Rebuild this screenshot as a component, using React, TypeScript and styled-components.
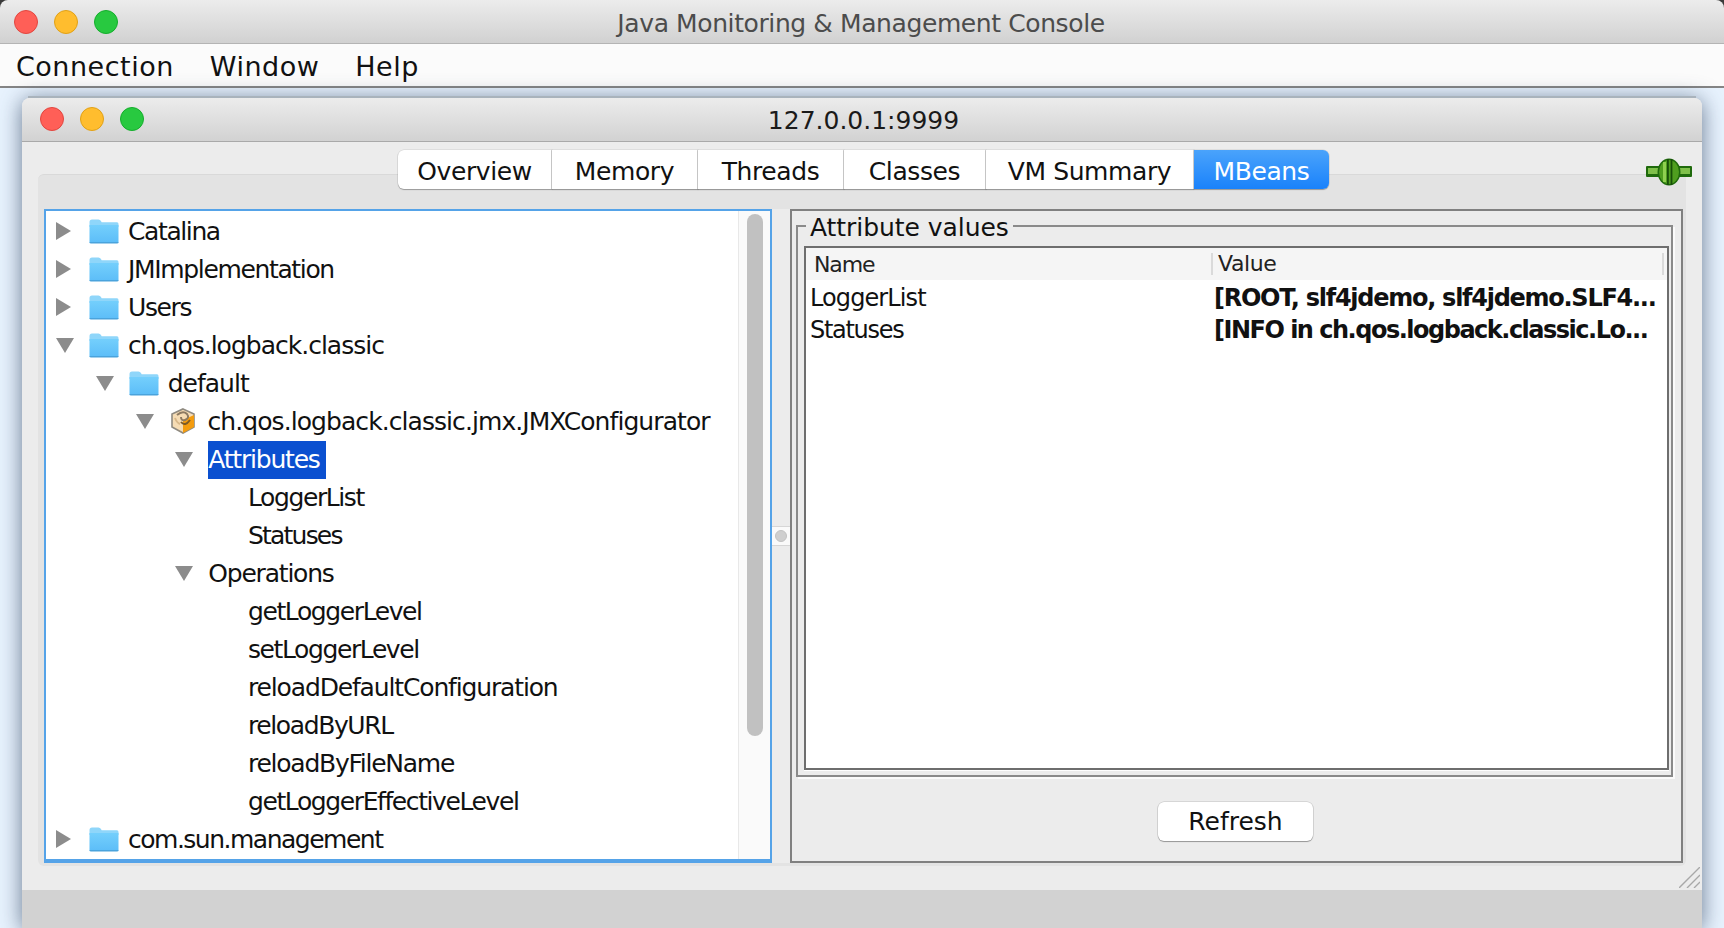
import React from 'react';
import styled, { createGlobalStyle } from 'styled-components';

const GlobalStyle = createGlobalStyle`
  html, body {
    margin: 0;
    padding: 0;
    background: #e8f3fe;
    overflow: hidden;
  }
  * {
    box-sizing: border-box;
  }
`;

const uiFont = `"DejaVu Sans", "Noto Sans", sans-serif`;

// ícones desenhados à mão

const Folder: React.FC = () => (
  <svg width="30" height="25" viewBox="0 0 30 25">
    <defs>
      <linearGradient id="folderBody" x1="0" y1="0" x2="0" y2="1">
        <stop offset="0" stopColor="#74cffc" />
        <stop offset="1" stopColor="#5cbdf8" />
      </linearGradient>
    </defs>
    <path d="M0.5 3 Q0.5 0.5 3 0.5 H9.5 Q11 0.5 12 2 L12.6 3.2 H28 Q29.5 3.2 29.5 5 V8 H0.5 Z" fill="#8fd6fa" />
    <path d="M0.5 6 H29.5 V22.5 Q29.5 24 28 24 H2 Q0.5 24 0.5 22.5 Z" fill="url(#folderBody)" />
    <path d="M0.5 23 H29.5 V23.2 Q29.5 24.6 28 24.6 H2 Q0.5 24.6 0.5 23.2 Z" fill="#4aa3dc" />
  </svg>
);

const Bean: React.FC = () => (
  <svg width="26" height="26" viewBox="-1 0 26 26">
    <path d="M13 1 L24 6 V19 L13 25 L2 19 V6 Z" fill="#f6dcb4" stroke="#8f8a80" strokeWidth="1.6" />
    <path d="M13 12 L24 7 V19 L13 25 Z" fill="#f49c0e" />
    <path d="M7 7 Q13 2 17 6 Q20 10 15 12 Q11 13 11 9" fill="none" stroke="#8d7a62" strokeWidth="2" />
    <path d="M11 14 Q15 19 20 12" fill="none" stroke="#7c5a28" strokeWidth="2" />
    <path d="M5 10 Q7 15 10 16" fill="none" stroke="#d8b88a" strokeWidth="2" />
  </svg>
);

const Plug: React.FC = () => (
  <svg width="46" height="28" viewBox="0 0 46 28">
    <rect x="0" y="8" width="46" height="11" rx="1" fill="#1f6a0c" />
    <rect x="2" y="10" width="42" height="6" fill="#7fc04a" />
    <ellipse cx="23" cy="14" rx="11.5" ry="13.5" fill="#1f6a0c" />
    <ellipse cx="23" cy="14" rx="10" ry="12" fill="#4f9e1f" />
    <rect x="17" y="4" width="3" height="20" fill="#8fd04f" />
    <rect x="21" y="1" width="1.8" height="26" fill="#174f08" />
    <rect x="24.6" y="1" width="1.8" height="26" fill="#174f08" />
  </svg>
);

const Grip: React.FC = () => (
  <svg width="21" height="21" viewBox="0 0 21 21">
    <path d="M0 21 L21 0 M8 21 L21 8 M15 21 L21 15" stroke="#a8a8a8" strokeWidth="1.4" fill="none" />
  </svg>
);

const Arrow: React.FC<{ open: boolean }> = ({ open }) =>
  open ? (
    <svg width="18" height="15" viewBox="0 0 18 15">
      <path d="M0 0 H18 L9 15 Z" fill="#8c8c8c" />
    </svg>
  ) : (
    <svg width="15" height="18" viewBox="0 0 15 18">
      <path d="M0 0 L15 9 L0 18 Z" fill="#8c8c8c" />
    </svg>
  );

type TreeNode = {
  label: string;
  level: number;
  arrow?: 'open' | 'closed';
  icon?: 'folder' | 'bean';
  selected?: boolean;
  spacing?: number;
};

const nodes: TreeNode[] = [
  { label: 'Catalina', level: 0, arrow: 'closed', icon: 'folder' },
  { label: 'JMImplementation', level: 0, arrow: 'closed', icon: 'folder', spacing: -1.35 },
  { label: 'Users', level: 0, arrow: 'closed', icon: 'folder' },
  { label: 'ch.qos.logback.classic', level: 0, arrow: 'open', icon: 'folder', spacing: -1.0 },
  { label: 'default', level: 1, arrow: 'open', icon: 'folder', spacing: -1.0 },
  { label: 'ch.qos.logback.classic.jmx.JMXConfigurator', level: 2, arrow: 'open', icon: 'bean', spacing: -0.93 },
  { label: 'Attributes', level: 3, arrow: 'open', selected: true, spacing: -1.2 },
  { label: 'LoggerList', level: 4 },
  { label: 'Statuses', level: 4, spacing: -1.8 },
  { label: 'Operations', level: 3, arrow: 'open', spacing: -1.2 },
  { label: 'getLoggerLevel', level: 4 },
  { label: 'setLoggerLevel', level: 4 },
  { label: 'reloadDefaultConfiguration', level: 4, spacing: -1.15 },
  { label: 'reloadByURL', level: 4 },
  { label: 'reloadByFileName', level: 4, spacing: -1.25 },
  { label: 'getLoggerEffectiveLevel', level: 4 },
  { label: 'com.sun.management', level: 0, arrow: 'closed', icon: 'folder', spacing: -1.5 },
];

const tabs = [
  { label: 'Overview', width: 154 },
  { label: 'Memory', width: 146 },
  { label: 'Threads', width: 146 },
  { label: 'Classes', width: 142 },
  { label: 'VM Summary', width: 208 },
  { label: 'MBeans', width: 135, active: true },
];

const attributes = [
  { name: 'LoggerList', nameSpacing: -0.9, value: '[ROOT, slf4jdemo, slf4jdemo.SLF4...', valueSpacing: -1.27 },
  { name: 'Statuses', nameSpacing: -1.3, value: '[INFO in ch.qos.logback.classic.Lo...', valueSpacing: -1.5 },
];

const App: React.FC = () => {
  return (
    <Screen>
      <GlobalStyle />
      <TitleBar>
        <Lights>
          <Light $fill="#ff5f57" $edge="#e2463f" />
          <Light $fill="#ffbd2e" $edge="#e1a116" />
          <Light $fill="#28c940" $edge="#14ae2c" />
        </Lights>
        <AppTitle>Java Monitoring &amp; Management Console</AppTitle>
      </TitleBar>
      <MenuBar>
        <MenuItem>Connection</MenuItem>
        <MenuItem>Window</MenuItem>
        <MenuItem>Help</MenuItem>
      </MenuBar>

      <Desktop>
        <InnerWindow>
          <InnerTitleBar>
            <InnerLights>
              <Light $fill="#ff5f57" $edge="#e2463f" />
              <Light $fill="#ffbd2e" $edge="#e1a116" />
              <Light $fill="#28c940" $edge="#14ae2c" />
            </InnerLights>
            <WindowTitle>127.0.0.1:9999</WindowTitle>
          </InnerTitleBar>

          <WindowBody>
            <TabStrip>
              {tabs.map((t) => (
                <Tab key={t.label} $width={t.width} $active={!!t.active}>
                  {t.label}
                </Tab>
              ))}
            </TabStrip>
            <PlugSlot>
              <Plug />
            </PlugSlot>

            <TabContent>
              <TreePane>
                <TreeRows>
                  {nodes.map((n) => (
                    <TreeRow key={n.label} $level={n.level}>
                      <ArrowSlot>{n.arrow && <Arrow open={n.arrow === 'open'} />}</ArrowSlot>
                      {n.icon && <IconSlot>{n.icon === 'folder' ? <Folder /> : <Bean />}</IconSlot>}
                      <NodeLabel $selected={!!n.selected} $spacing={n.spacing ?? -1.4}>
                        {n.label}
                      </NodeLabel>
                    </TreeRow>
                  ))}
                </TreeRows>
                <ScrollTrack>
                  <ScrollThumb />
                </ScrollTrack>
              </TreePane>

              <Splitter>
                <SplitHandle>
                  <SplitDot />
                </SplitHandle>
              </Splitter>

              <DetailPane>
                <AttributeBox>
                  <AttributeLegend>Attribute values</AttributeLegend>
                  <AttributeTable>
                    <HeaderRow>
                      <NameHeader>Name</NameHeader>
                      <ValueHeader>Value</ValueHeader>
                    </HeaderRow>
                    {attributes.map((a) => (
                      <DataRow key={a.name}>
                        <NameCell $spacing={a.nameSpacing}>{a.name}</NameCell>
                        <ValueCell $spacing={a.valueSpacing}>{a.value}</ValueCell>
                      </DataRow>
                    ))}
                  </AttributeTable>
                </AttributeBox>
                <ButtonRow>
                  <RefreshButton>Refresh</RefreshButton>
                </ButtonRow>
              </DetailPane>
            </TabContent>

            <GripSlot>
              <Grip />
            </GripSlot>
          </WindowBody>

          <StatusStrip />
        </InnerWindow>
      </Desktop>
    </Screen>
  );
};

export default App;

// Estilos

const Screen = styled.div`
  width: 1724px;
  height: 928px;
  display: flex;
  flex-direction: column;
  overflow: hidden;
  background: #3a3a3a;
  font-family: ${uiFont};
  color: #111;
`;

const TitleBar = styled.div`
  position: relative;
  height: 44px;
  flex: none;
  display: flex;
  align-items: center;
  justify-content: center;
  background: linear-gradient(#ececec, #d1d1d1);
  border-bottom: 1px solid #b4b4b4;
  border-radius: 8px 8px 0 0;
`;

const Lights = styled.div`
  position: absolute;
  left: 14px;
  top: 10px;
  display: flex;
  gap: 16px;
`;

const InnerLights = styled(Lights)`
  left: 18px;
  top: 9px;
`;

const Light = styled.span<{ $fill: string; $edge: string }>`
  width: 24px;
  height: 24px;
  border-radius: 50%;
  background: ${(p) => p.$fill};
  border: 1px solid ${(p) => p.$edge};
`;

const AppTitle = styled.div`
  padding-top: 4px;
  font-size: 25px;
  letter-spacing: -0.4px;
  color: #4c4c4c;
  margin-left: -2px;
`;

const MenuBar = styled.div`
  height: 44px;
  flex: none;
  display: flex;
  gap: 36px;
  align-items: center;
  padding: 2px 0 0 16px;
  background: #fbfbfb;
  border-bottom: 2px solid #858585;
`;

const MenuItem = styled.span`
  font-size: 27px;
  letter-spacing: 0.5px;
`;

const Desktop = styled.div`
  flex: 1;
  display: flex;
  padding: 10px 22px 0 22px;
  background: #e8f3fe;
`;

const InnerWindow = styled.div`
  position: relative;
  flex: 1;
  display: flex;
  flex-direction: column;
  border-radius: 8px 8px 0 0;
  box-shadow: 0 2px 22px rgba(45, 65, 95, 0.7);
  background: #ececec;

  &::before {
    content: '';
    position: absolute;
    top: -2px;
    left: 6px;
    right: 6px;
    height: 2px;
    background: #a9b3bc;
  }
`;

const InnerTitleBar = styled.div`
  position: relative;
  height: 44px;
  flex: none;
  display: flex;
  align-items: center;
  justify-content: center;
  background: linear-gradient(#ececec, #d2d2d2);
  border-bottom: 1px solid #a9a9a9;
  border-radius: 8px 8px 0 0;
`;

const WindowTitle = styled.div`
  padding-top: 2px;
  font-size: 25px;
  letter-spacing: 0;
  color: #1a1a1a;
  margin-left: 3px;
`;

const WindowBody = styled.div`
  position: relative;
  flex: 1;
  display: flex;
  flex-direction: column;
  padding: 8px 16px 24px;
  background: #ececec;
`;

const TabStrip = styled.div`
  position: relative;
  z-index: 1;
  flex: none;
  display: flex;
  justify-content: center;
  height: 39px;
  padding-left: 3px;
`;

const Tab = styled.div<{ $width: number; $active: boolean }>`
  width: ${(p) => p.$width}px;
  display: flex;
  align-items: center;
  justify-content: center;
  padding-top: 4px;
  font-size: 25px;
  letter-spacing: -0.4px;
  background: ${(p) => (p.$active ? 'linear-gradient(#4aa3fb, #1a82fb)' : '#fff')};
  color: ${(p) => (p.$active ? '#fff' : '#111')};
  box-shadow: 0 1px 1px rgba(0, 0, 0, 0.28), 0 0 0 0.5px rgba(0, 0, 0, 0.12);
  border-right: 1px solid #dcdcdc;

  &:first-child {
    border-radius: 6px 0 0 6px;
  }
  &:last-child {
    border-radius: 0 6px 6px 0;
    border-right: none;
  }
`;

const PlugSlot = styled.div`
  position: absolute;
  z-index: 1;
  right: 10px;
  top: 16px;
  display: flex;
`;

const TabContent = styled.div`
  flex: 1;
  min-height: 0;
  margin-top: -15px;
  padding: 34px 3px 3px 6px;
  display: flex;
  background: #e3e3e3;
  border: 1px solid #d9d9d9;
  border-radius: 6px;
  border-width: 1px 0 0 0;
`;

const TreePane = styled.div`
  width: 728px;
  flex: none;
  display: flex;
  background: #fff;
  border: 2px solid #55a3e8;
  border-bottom-width: 4px;
`;

const TreeRows = styled.div`
  flex: 1;
  padding-top: 2px;
  overflow: hidden;
`;

const TreeRow = styled.div<{ $level: number }>`
  height: 38px;
  display: flex;
  align-items: center;
  padding-left: ${(p) => 10 + p.$level * 39.75}px;
  font-size: 25px;
  white-space: nowrap;
`;

const ArrowSlot = styled.span`
  width: 33px;
  flex: none;
  display: flex;
  align-items: center;
  padding-bottom: 2px;
`;

const IconSlot = styled.span`
  width: 39px;
  flex: none;
  display: flex;
  align-items: center;
  padding-bottom: 2px;
`;

const NodeLabel = styled.span<{ $selected: boolean; $spacing: number }>`
  height: 38px;
  line-height: 38px;
  letter-spacing: ${(p) => p.$spacing}px;
  padding-right: ${(p) => (p.$selected ? '6px' : '0')};
  background: ${(p) => (p.$selected ? '#0b50d0' : 'transparent')};
  color: ${(p) => (p.$selected ? '#fff' : '#111')};
`;

const ScrollTrack = styled.div`
  width: 32px;
  flex: none;
  padding: 3px 8px 0;
  background: #fafafa;
  border-left: 1px solid #e8e8e8;
`;

const ScrollThumb = styled.div`
  width: 16px;
  height: 522px;
  border-radius: 8px;
  background: #c1c1c1;
`;

const Splitter = styled.div`
  width: 18px;
  flex: none;
  display: flex;
  align-items: center;
  padding-bottom: 1px;
  background: #ececec;
`;

const SplitHandle = styled.div`
  width: 100%;
  height: 20px;
  display: flex;
  align-items: center;
  justify-content: center;
  background: #fafafa;
  border: solid #d6d6d6;
  border-width: 1px 0;
`;

const SplitDot = styled.span`
  width: 12px;
  height: 12px;
  border-radius: 50%;
  background: #cfcfcf;
  border: 1px solid #c2c2c2;
`;

const DetailPane = styled.div`
  flex: 1;
  min-width: 0;
  display: flex;
  flex-direction: column;
  background: #ececec;
  border: 2px solid #808080;
`;

const AttributeBox = styled.fieldset`
  flex: 1;
  min-height: 0;
  margin: 0 8px 0 4px;
  padding: 5px 2px 5px 6px;
  display: flex;
  flex-direction: column;
  border: 2px solid #8a8a8a;
  box-shadow: 2px 2px 0 #fbfbfb;
`;

const AttributeLegend = styled.legend`
  margin-left: 2px;
  padding: 0 4px;
  height: 30px;
  line-height: 34px;
  font-size: 25px;
  letter-spacing: -0.05px;
`;

const AttributeTable = styled.div`
  flex: 1;
  background: #fff;
  border: 2px solid #6e6e6e;
  box-shadow: 0 1px 0 #fff;
`;

const HeaderRow = styled.div`
  height: 32px;
  display: grid;
  grid-template-columns: 405px 1fr;
  align-items: center;
  background: #f5f5f5;
`;

const HeaderCell = styled.div`
  padding-left: 8px;
  font-size: 22px;
  letter-spacing: -0.4px;
  color: #222;
`;

const NameHeader = styled(HeaderCell)`
  letter-spacing: -1.1px;
`;

const ValueHeader = styled(HeaderCell)`
  height: 22px;
  line-height: 22px;
  padding-left: 5px;
  border: solid #dadada;
  border-width: 0 2px;
  margin-right: 3px;
`;

const DataRow = styled.div`
  height: 32px;
  padding-top: 4px;
  display: grid;
  grid-template-columns: 408px 1fr;
  align-items: center;
  font-size: 24px;
  white-space: nowrap;
`;

const NameCell = styled.div<{ $spacing: number }>`
  padding-left: 4px;
  letter-spacing: ${(p) => p.$spacing}px;
`;

const ValueCell = styled.div<{ $spacing: number }>`
  font-weight: 700;
  letter-spacing: ${(p) => p.$spacing}px;
  overflow: hidden;
`;

const ButtonRow = styled.div`
  height: 84px;
  flex: none;
  display: flex;
  align-items: center;
  justify-content: center;
  padding: 4px 2px 0 0;
`;

const RefreshButton = styled.button`
  width: 155px;
  height: 39px;
  padding: 0;
  font-family: ${uiFont};
  font-size: 25px;
  color: #111;
  background: #fff;
  border: none;
  border-radius: 6px;
  box-shadow: 0 1px 1px rgba(0, 0, 0, 0.3), 0 0 0 0.5px rgba(0, 0, 0, 0.18);
`;

const GripSlot = styled.div`
  position: absolute;
  right: 2px;
  bottom: 2px;
  display: flex;
`;

const StatusStrip = styled.div`
  height: 38px;
  flex: none;
  background: #d2d2d2;
`;
